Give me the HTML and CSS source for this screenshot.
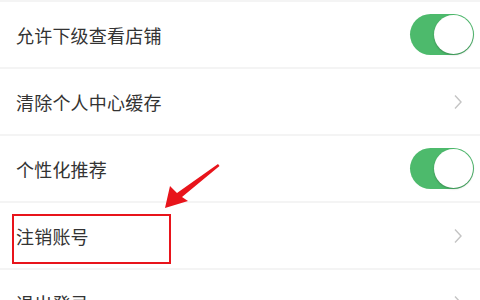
FILE: index.html
```html
<!DOCTYPE html>
<html lang="zh">
<head>
<meta charset="utf-8">
<link rel="stylesheet" href="styles.css">
</head>
<body>
<div class="list">
  <div class="row">
    <span class="label">允许下级查看店铺</span>
    <span class="switch on"><span class="knob"></span></span>
  </div>
  <div class="row">
    <span class="label">清除个人中心缓存</span>
    <svg class="chev" width="10" height="16" viewBox="0 0 10 16"><path d="M2 1.5 L8 8 L2 14.5" fill="none" stroke="#c4c4c4" stroke-width="1.4"/></svg>
  </div>
  <div class="row">
    <span class="label">个性化推荐</span>
    <span class="switch on"><span class="knob"></span></span>
  </div>
  <div class="row">
    <span class="label">注销账号</span>
    <svg class="chev" width="10" height="16" viewBox="0 0 10 16"><path d="M2 1.5 L8 8 L2 14.5" fill="none" stroke="#c4c4c4" stroke-width="1.4"/></svg>
  </div>
  <div class="row">
    <span class="label">退出登录</span>
    <svg class="chev" width="10" height="16" viewBox="0 0 10 16"><path d="M2 1.5 L8 8 L2 14.5" fill="none" stroke="#c4c4c4" stroke-width="1.4"/></svg>
  </div>
</div>
<div class="highlight"></div>
<svg class="pointer" width="70" height="60" viewBox="0 0 70 60">
  <polygon points="55,11 56.5,13 19,44 25,48 2,55 7,33 14,40" fill="#e8141b"/>
</svg>
</body>
</html>
```

FILE: styles.css
```css
html, body {
  margin: 0;
  padding: 0;
  background: #ffffff;
  width: 480px;
  height: 300px;
  overflow: hidden;
  font-family: "Noto Sans CJK SC", "Noto Sans", sans-serif;
}
.list::before {
  content: "";
  display: block;
  height: 2px;
  background: #f4f4f4;
}
.row {
  height: 65px;
  display: flex;
  align-items: center;
  justify-content: space-between;
  padding: 0 17px 0 16px;
  border-bottom: 2px solid #f4f4f4;
}
.label {
  font-size: 18px;
  color: #333333;
  letter-spacing: 0.2px;
}
.switch {
  width: 64px;
  height: 41px;
  border-radius: 21px;
  background: #4dba6c;
  position: relative;
  margin-right: -11px;
}
.knob {
  position: absolute;
  right: 1px;
  top: 1px;
  width: 39px;
  height: 39px;
  border-radius: 50%;
  background: #ffffff;
  box-shadow: 0 1px 2px rgba(0,0,0,0.25);
}
.chev {
  display: block;
}
.highlight {
  position: absolute;
  left: 12px;
  top: 214px;
  width: 155px;
  height: 46px;
  border: 2px solid #e8141b;
}
.pointer {
  position: absolute;
  left: 163px;
  top: 153px;
}
```
